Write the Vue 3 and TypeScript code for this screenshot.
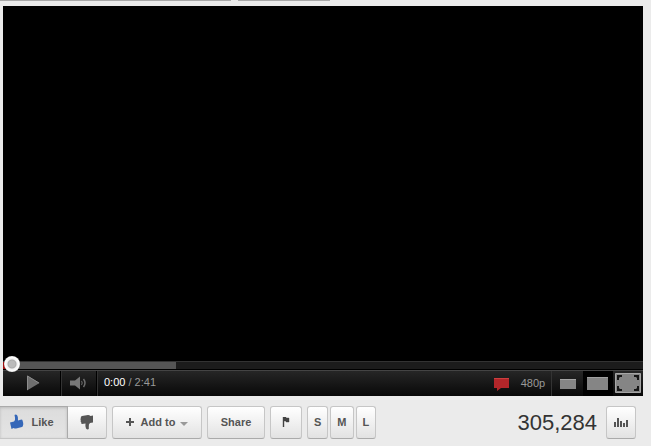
<script setup lang="ts">
import { computed, ref } from 'vue'

const duration = 161
const position = ref(0)
const loaded = 27
const liked = ref(true)
const size = ref('large')
const sizes = ['S', 'M', 'L']

function clock(seconds: number): string {
  const rest = String(seconds % 60).padStart(2, '0')
  return `${Math.floor(seconds / 60)}:${rest}`
}

const elapsed = computed(() => clock(position.value))
</script>

<template>
  <main class="watch">
    <div class="tabs"><i class="tab tab-wide"></i><i class="tab"></i></div>

    <section class="player">
      <div class="video"></div>
      <div class="progress">
        <div class="loaded" :style="{ width: loaded + '%' }"></div>
        <div class="played"></div>
        <input v-model.number="position" class="seek" type="range" min="0" :max="duration" aria-label="Seek" />
      </div>
      <div class="controls">
        <button class="ctl play" aria-label="Play">
          <svg width="14" height="16" viewBox="0 0 14 16"><path d="M1 .5v15L13.500 8z" fill="#6e6e6e" /><path d="M1.500 15V1L13 8" fill="none" stroke="#8c8c8c" /></svg>
        </button>
        <button class="ctl volume" aria-label="Mute">
          <svg width="17" height="14" viewBox="0 0 17 14">
            <path d="M0 4.500h5L10 .5v13L5 9.500H0z" fill="#777" />
            <path d="M11.500 5q1.500 2 0 4" fill="none" stroke="#666" stroke-width="1.200" />
            <path d="M13.500 3q3 4 0 8" fill="none" stroke="#6c6c6c" stroke-width="1.500" />
          </svg>
        </button>
        <div class="time"><b>{{ elapsed }}</b> / {{ clock(duration) }}</div>
        <button class="ctl notes" aria-label="Annotations">
          <svg width="15" height="14" viewBox="0 0 15 14">
            <path d="M0 1h15v10H7l-4 3v-3H0z" fill="#b3262a" />
            <path d="M0 1.500h15" stroke="#cb3f3f" />
          </svg>
        </button>
        <button class="ctl quality">480p</button>
        <button class="ctl small" aria-label="Small player" @click="size = 'small'">
          <svg width="16" height="10" viewBox="0 0 16 10"><path d="M0 0h16v10H0z" fill="#858585" /><path d="M0 .5h16" stroke="#a5a5a5" /></svg>
        </button>
        <button class="ctl large" :class="{ current: size === 'large' }" aria-label="Large player" @click="size = 'large'">
          <svg width="21" height="13" viewBox="0 0 21 13"><path d="M0 0h21v13H0z" fill="#858585" /><path d="M0 .5h21" stroke="#a0a0a0" /></svg>
        </button>
        <button class="ctl full" aria-label="Full screen">
          <svg width="26" height="20" viewBox="0 0 26 20">
            <path d="M.5.5h25v19H.5z" fill="#858585" stroke="#a6a6a6" />
            <path d="M2 2h5v2H5l-1 1v2H2zM24 2h-5v2h2l1 1v2h2zM2 18h5v-2H5l-1-1v-2H2zM24 18h-5v-2h2l1-1v-2h2z" fill="#151515" />
          </svg>
        </button>
      </div>
    </section>

    <section class="actions">
      <div class="vote">
        <button class="btn like" :class="{ pressed: liked }" @click="liked = !liked">
          <svg width="14" height="16" viewBox="0 0 14 16">
            <path d="M0 8.500L4 7.500Q5.500 6 5 3.500L4.500 1Q5.500 0 7 1Q8.500 3 8 6.500L11.500 5.500Q13 5.500 12.500 7Q13.500 8 13 9Q13.800 10 13 11Q13.300 12.500 12 13L6 14.500Q4.500 14.500 3.500 14L1.500 15z" fill="#3567b8" />
          </svg>
          Like
        </button>
        <button class="btn dislike" aria-label="Dislike">
          <svg width="14" height="16" viewBox="0 0 14 16">
            <path d="M13 1.500v7L10 9Q8.500 10 8.800 12.500V15Q7.500 16 6 14.500Q5 12.500 5.500 9.500L2 10Q.8 9.500 1.300 8.500Q.2 7.500.8 6.500Q.2 5 .8 4Q.5 2.500 2 2L8 1Q9.500 1 10.500 2z" fill="#555" />
          </svg>
        </button>
      </div>
      <button class="btn add">
        <svg width="8" height="8" viewBox="0 0 8 8"><path d="M3 0h2v3h3v2H5v3H3V5H0V3h3z" fill="#555" /></svg>
        Add to
        <svg class="caret" width="8" height="4" viewBox="0 0 8 4"><path d="M0 0h8L4 4z" fill="#999" /></svg>
      </button>
      <button class="btn share">Share</button>
      <button class="btn flag" aria-label="Flag">
        <svg width="8" height="10" viewBox="0 0 8 10"><path d="M1 0h3v1h3v4H4V4H2v6H1z" fill="#444" stroke="#444" stroke-width=".4" /></svg>
      </button>
      <div class="sizes">
        <button v-for="s in sizes" :key="s" class="btn letter">{{ s }}</button>
      </div>
      <span class="count">305,284</span>
      <button class="btn stats" aria-label="Statistics">
        <svg width="14" height="10" viewBox="0 0 14 10"><path d="M0 5h2v5H0zM3 1h2v9H3zM6 4h2v6H6zM9 6h2v4H9zM12 3h2v7h-2z" fill="#555" /></svg>
      </button>
    </section>
  </main>
</template>

<style>
body {
  background: #ebebeb;
}
</style>

<style scoped>
.watch {
  font-family: "Liberation Sans", Arial, sans-serif;
  font-size: 11px;
  overflow: hidden;
}
button {
  box-sizing: border-box;
  display: flex;
  align-items: center;
  justify-content: center;
  margin: 0;
  padding: 0;
  font: inherit;
  cursor: pointer;
}
svg {
  display: block;
  flex: none;
}
.tabs {
  display: flex;
  gap: 7px;
  height: 1px;
}
.tab {
  width: 92px;
  background: #a8a8a8;
}
.tab-wide {
  width: 231px;
}
.player {
  margin: 5px 8px 0 3px;
  background: #000;
}
.video {
  aspect-ratio: 640 / 355;
}
.progress {
  position: relative;
  box-sizing: border-box;
  height: 9px;
  border-top: 1px solid #333;
  border-bottom: 1px solid #000;
  background: #1c1c1c;
}
.loaded {
  height: 7px;
  background: #555;
}
.played {
  position: absolute;
  top: 0;
  left: 0;
  width: 6px;
  height: 7px;
  background: #a01010;
}
.seek {
  position: absolute;
  top: -6px;
  left: 1px;
  width: calc(100% - 2px);
  height: 16px;
  margin: 0;
  appearance: none;
  background: transparent;
}
.seek::-webkit-slider-thumb {
  appearance: none;
  width: 16px;
  height: 16px;
  border-radius: 50%;
  background: radial-gradient(circle, #bbb 0 3px, #aaa 4px, #f0f0f0 5px, #fff 7px, #ddd 8px);
}
.controls {
  box-sizing: border-box;
  display: flex;
  height: 26px;
  border-top: 1px solid #444;
  background: linear-gradient(#262626, #080808);
  color: #999;
}
.ctl {
  border: 0;
  background: transparent;
  color: inherit;
}
.play {
  width: 58px;
  padding-left: 2px;
  padding-bottom: 1px;
  border-right: 1px solid #000;
}
.volume {
  width: 36px;
  padding-right: 2px;
  padding-bottom: 1px;
  border-left: 1px solid #333;
  border-right: 1px solid #000;
}
.time {
  flex: 1;
  padding-left: 6px;
  border-left: 1px solid #333;
  line-height: 23px;
}
.time b {
  color: #fff;
  font-weight: normal;
}
.notes {
  width: 28px;
}
.quality {
  width: 36px;
  padding-bottom: 2px;
}
.small {
  width: 32px;
  border-left: 1px solid #333;
}
.large {
  width: 30px;
  padding-right: 2px;
  padding-bottom: 1px;
}
.current {
  background: #000;
}
.full {
  width: 30px;
  padding-bottom: 1px;
}
.actions {
  display: flex;
  align-items: center;
  gap: 5px;
  padding: 10px 15px 6px 0;
}
.vote {
  display: flex;
}
.btn {
  height: 33px;
  padding-bottom: 1px;
  border: 1px solid #c6c6c6;
  border-bottom-color: #aaa;
  border-radius: 3px;
  background: linear-gradient(#fff, #e2e2e2);
  color: #555;
  font-weight: bold;
}
.like {
  width: 68px;
  gap: 7px;
  padding-right: 3px;
  border-left: 0;
  border-radius: 0;
}
.pressed {
  border-color: #aaa #aaa #c6c6c6;
  background: linear-gradient(#dcdcdc, #e4e4e4);
  box-shadow: inset 0 1px 3px #bbb;
}
.dislike {
  width: 39px;
  border-left: 0;
  border-radius: 0 3px 3px 0;
}
.add {
  width: 90px;
  gap: 7px;
}
.caret {
  margin: 3px 0 0 -2px;
}
.share {
  width: 58px;
}
.flag {
  width: 32px;
}
.sizes {
  display: flex;
  gap: 2px;
}
.letter {
  padding: 0 6px 1px;
}
.count {
  margin-left: auto;
  margin-right: 4px;
  color: #333;
  font-size: 22px;
  line-height: 33px;
}
.stats {
  width: 30px;
}
</style>
